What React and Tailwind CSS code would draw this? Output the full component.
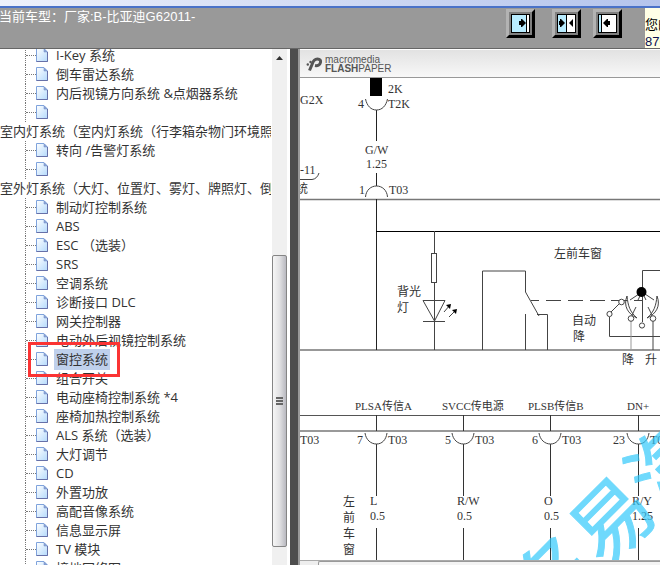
import React from "react";

const ROWS = [
  { label: "I-Key 系统" },
  { label: "倒车雷达系统" },
  { label: "内后视镜方向系统 &点烟器系统" },
  { label: "" },
  { label: "室内灯系统（室内灯系统（行李箱杂物门环境照明灯）", group: true },
  { label: "转向 /告警灯系统" },
  { label: "" },
  { label: "室外灯系统（大灯、位置灯、雾灯、牌照灯、倒车灯）", group: true },
  { label: "制动灯控制系统" },
  { label: "ABS" },
  { label: "ESC （选装）" },
  { label: "SRS" },
  { label: "空调系统" },
  { label: "诊断接口 DLC" },
  { label: "网关控制器" },
  { label: "电动外后视镜控制系统" },
  { label: "窗控系统", selected: true },
  { label: "组合开关" },
  { label: "电动座椅控制系统 *4" },
  { label: "座椅加热控制系统" },
  { label: "ALS 系统（选装）" },
  { label: "大灯调节" },
  { label: "CD" },
  { label: "外置功放" },
  { label: "高配音像系统" },
  { label: "信息显示屏" },
  { label: "TV 模块" },
  { label: "接地网络图" },
];

function PageIcon() {
  return (
    <svg className="h-[15px] w-3 shrink-0" viewBox="0 0 12 15" aria-hidden="true">
      <defs>
        <linearGradient id="sheet" x1="0" y1="0" x2="1" y2="1">
          <stop offset="0" stopColor="#ffffff" />
          <stop offset="1" stopColor="#b4dafc" />
        </linearGradient>
      </defs>
      <path d="M0.5 0.5H8L11.5 4V13.5H0.5Z" fill="url(#sheet)" stroke="#7fa3dc" />
      <path d="M11.5 4V13.5H0.5" fill="none" stroke="#6670a8" />
      <path d="M8 1V4H11Z" fill="#8fa8d8" stroke="#6f88c4" strokeWidth="0.5" />
    </svg>
  );
}

function TreeRow({ row }) {
  if (row.group) {
    return (
      <li className="flex h-[19px] items-center overflow-hidden whitespace-nowrap">
        <a href="#group">{row.label}</a>
      </li>
    );
  }
  return (
    <li className="relative ml-[25px] flex h-[19px] items-center border-l border-dotted border-[#777] whitespace-nowrap">
      <span className="w-2.5 shrink-0 border-t border-dotted border-[#777]" />
      <PageIcon />
      <a
        href="#page"
        aria-label={row.label || "page"}
        className={row.selected ? "ml-1.5 bg-[#bfd0ec] px-0.5 leading-[21px]" : "ml-2 leading-[19px]"}
      >
        {row.label}
      </a>
      {row.selected && (
        <span className="absolute -top-2 left-0.5 z-10 h-[35px] w-[92px] border-3 border-[#fb3434]" />
      )}
    </li>
  );
}

function PaneButton({ label, children }) {
  return (
    <button
      type="button"
      aria-label={label}
      className="flex size-[29px] items-center justify-center border-3 border-t-[#b3b3b3] border-r-black border-b-black border-l-[#b3b3b3] bg-[#808080]"
    >
      <svg className="h-[19px] w-[19px]" viewBox="0 0 19 19" aria-hidden="true">
        {children}
      </svg>
    </button>
  );
}

function Header() {
  return (
    <header className="flex h-[49px] shrink-0 flex-col border-b border-[#666] bg-[#999]">
      <div className="h-2 shrink-0 border-b-2 border-[#4a72c8] bg-linear-to-r from-[#eef1fb] to-[#b4c4ec]" />
      <div className="flex min-h-0 flex-1">
        <h1 className="-ml-px flex-1 whitespace-nowrap font-['Liberation_Sans','Noto_Sans_CJK_SC',sans-serif] text-[13px] leading-[17px] text-white">
          当前车型：厂家:B-比亚迪G62011-
        </h1>
        <div className="flex pt-px">
          <PaneButton label="展开左栏">
            <rect x="0.5" y="0.5" width="18" height="18" fill="#fff" stroke="#000" />
            <rect x="1" y="1" width="14" height="17" fill="#b8ecff" />
            <path d="M15.5 1V18" stroke="#000" />
            <path d="M8 7H10V5H11L15 9L11 13H10V11H8Z" fill="#000" />
          </PaneButton>
          <div className="ml-[17px]">
            <PaneButton label="左右均分">
              <rect x="0.5" y="0.5" width="18" height="18" fill="#fff" stroke="#000" />
              <rect x="1" y="1" width="8" height="17" fill="#b8ecff" />
              <path d="M9.5 1V18" stroke="#000" />
              <path d="M3 7V5H4L8 9L4 13H3V11H2V7Z" fill="#000" />
              <path d="M16 5V13L12 9Z" fill="#000" />
            </PaneButton>
          </div>
          <div className="ml-3">
            <PaneButton label="展开右栏">
              <rect x="0.5" y="0.5" width="18" height="18" fill="#fff" stroke="#000" />
              <rect x="1" y="1" width="2" height="17" fill="#b8ecff" />
              <path d="M3.5 1V18" stroke="#000" />
              <path d="M12 7H10V5H9L5 9L9 13H10V11H12Z" fill="#000" />
            </PaneButton>
          </div>
        </div>
        <div className="ml-[23px] w-[15px] overflow-hidden bg-[#ffffe6] pt-2 font-['Liberation_Sans','Noto_Sans_CJK_SC',sans-serif] text-[13px] leading-[17px] whitespace-nowrap text-black">
          <p>您的</p>
          <p>
            <span className="text-[#0c1050]">87</span>
            <span className="text-[#f0a030]">6</span>
          </p>
        </div>
      </div>
    </header>
  );
}

function VerticalScrollbar() {
  return (
    <div className="flex w-4 shrink-0 flex-col items-center border-r border-white bg-[#f0f0f0] pb-[18px]">
      <div className="flex h-[18px] items-center">
        <svg className="h-1 w-[7px]" viewBox="0 0 7 4" aria-hidden="true">
          <path d="M0 4L3.5 0L7 4Z" fill="#333" />
        </svg>
      </div>
      <div className="mt-[188px] flex w-[15px] flex-1 flex-col items-center justify-center gap-px rounded-[2px] border border-[#858585] bg-linear-to-r from-[#f6f6f6] via-[#e2e2e4] to-[#b9b9c0]">
        <span className="h-0.5 w-[7px] bg-[#666]" />
        <span className="h-0.5 w-[7px] bg-[#666]" />
        <span className="h-0.5 w-[7px] bg-[#666]" />
      </div>
    </div>
  );
}

const PINS = [
  { x: 376, name: "PLSA传信A", nameX: 355, pin: "7", pinX: 357, color: "L", value: "0.5" },
  { x: 463, name: "SVCC传电源", nameX: 442, pin: "5", pinX: 445, color: "R/W", value: "0.5" },
  { x: 550, name: "PLSB传信B", nameX: 528, pin: "6", pinX: 532, color: "O", value: "0.5" },
  { x: 638, name: "DN+", nameX: 627, pin: "23", pinX: 613, color: "R/Y", value: "1.25" },
];

function WiringDiagram() {
  return (
    <svg
      className="min-h-0 w-full flex-1 bg-white font-['Liberation_Serif','Noto_Sans_CJK_SC',serif] text-[12px]"
      role="img"
      aria-label="左前车窗"
    >
      <g transform="translate(-300 -78)">
        <g fill="none" stroke="#444" strokeWidth="1">
          <path d="M300 199.5H660M300 350H660" stroke="#777" strokeWidth="1.4" />
          <path d="M300 415.5H660" stroke="#555" />
          <path d="M300 431H660" stroke="#999" strokeWidth="2" />
          <path d="M376.5 110V141M376.5 173V186M376.5 199V350" stroke="#222" />
          <path d="M365.5 99C367 106 371 110 376.5 110S386 106 387.5 99" />
          <path d="M365.5 197C366 190 371 186 376.5 186S387 190 387.5 197" />
          <path d="M300 179.5H312Q317 179 319 173" />
          <path d="M376 231.5H660" stroke="#000" />
          <path d="M434.5 231V253M434.5 282V350" />
          <rect x="431.5" y="253.5" width="5" height="29" />
          <path d="M423 300.5H445L434.5 321ZM423 321.5H445" />
          <path d="M444 312L450 305M449 317L456 310" />
          <path d="M482.5 350V271H525.5V292L539 316M537 314.5H547.5V350M525.5 314V350" />
          <path d="M531 300.5H539M546 300.5H561M568 300.5H583M590 300.5H605M611 300.5H627M634 300.5H643" />
          <path d="M660 270.5H642.5V322" />
          <path d="M611 312L619 304M630 300L642 292L654 300M638 300L642 292L646 300" />
          <path d="M609.5 317V336.5H660M653 321V350" />
          <path d="M631 321V350" stroke="#999" />
          <path d="M627 296C623 306 628 314 637 318C630 312 628 306 627 296Z" />
          <path d="M657 296C661 306 656 314 647 318C654 312 656 306 657 296Z" />
          <path d="M636 307L632 315M648 307L652 315" />
          <g fill="#fff">
            <circle cx="609.5" cy="314" r="2.6" />
            <circle cx="621.5" cy="302" r="2.8" />
            <circle cx="631" cy="318.5" r="2.8" />
            <circle cx="653" cy="318.5" r="2.8" />
            <circle cx="642" cy="325.5" r="2.6" />
          </g>
        </g>
        <rect x="370" y="78" width="12" height="18" fill="#000" />
        <circle cx="641.5" cy="292" r="5" fill="#000" />
        <path d="M451 304L450 309L446 305ZM457 309L456 314L452 310Z" fill="#000" />

        <g fill="#333">
          <text x="388" y="93">2K</text>
          <text x="358" y="108">4</text>
          <text x="388" y="108">T2K</text>
          <text x="300" y="104">G2X</text>
          <text x="365" y="154">G/W</text>
          <text x="366" y="168">1.25</text>
          <text x="300" y="174">-11</text>
          <text x="359" y="194">1</text>
          <text x="389" y="194">T03</text>
          <text x="300" y="444">T03</text>
          <text x="296" y="193">统</text>
          <text x="397" y="296">背光</text>
          <text x="397" y="312">灯</text>
          <text x="554" y="258">左前车窗</text>
          <text x="572" y="325">自动</text>
          <text x="573" y="341">降</text>
          <text x="622" y="364">降</text>
          <text x="645" y="364">升</text>
          <text x="343" y="506">左</text>
          <text x="343" y="522">前</text>
          <text x="343" y="538">车</text>
          <text x="343" y="554">窗</text>
        </g>

        {PINS.map((p) => (
          <g key={p.name} fill="#333">
            <path
              d={`M${p.x + 0.5} 415V431M${p.x + 0.5} 444V496M${p.x + 0.5} 528V560`}
              stroke="#333"
              fill="none"
            />
            <path
              d={`M${p.x - 11} 433C${p.x - 10} 440 ${p.x - 5} 444 ${p.x + 0.5} 444S${p.x + 10} 440 ${p.x + 11} 433`}
              stroke="#444"
              fill="none"
            />
            <text x={p.nameX} y="410" className="text-[11px]">{p.name}</text>
            <text x={p.pinX} y="444">{p.pin}</text>
            <text x={p.x + 12} y="444">T03</text>
            <text x={p.x - 6} y="505">{p.color}</text>
            <text x={p.x - 6} y="520">{p.value}</text>
          </g>
        ))}

        <text
          x="608"
          y="516"
          transform="rotate(-45 608 516)"
          textAnchor="middle"
          dominantBaseline="central"
          fill="#33c9fb"
          stroke="#33c9fb"
          strokeWidth="1"
          opacity="0.7"
          className="font-['Noto_Sans_CJK_SC',sans-serif] text-[80px]"
        >
          名易汽
        </text>
      </g>
    </svg>
  );
}

function FlashPaper() {
  return (
    <main className="flex min-w-0 flex-1 flex-col overflow-hidden pt-px">
      <div className="flex h-7 shrink-0 items-center gap-0.5 border-b border-[#999] bg-linear-to-b from-[#e2e2e2] to-[#f8f8f8] pl-1.5 font-['Liberation_Sans',sans-serif] text-[#555]">
        <svg className="h-4 w-[17px]" viewBox="0 0 17 16" aria-hidden="true">
          <path
            d="M3.5 14.5L6 8.5C7 5 8.5 3 11.5 3C14 3 15 4.5 14.5 6.5C14 9 11.5 10 9 9.5"
            fill="none"
            stroke="#555"
            strokeWidth="3"
          />
          <circle cx="1.8" cy="8.5" r="1.2" fill="#555" />
          <circle cx="4.5" cy="6" r="1.2" fill="#555" />
        </svg>
        <div>
          <p className="text-[10px] leading-[9px]">macromedia</p>
          <p className="text-[10px] leading-[9px]">
            <b>FLASH</b>PAPER
          </p>
        </div>
      </div>
      <WiringDiagram />
      <div className="flex h-[5px] shrink-0 border-t border-[#aaa] bg-[#eee] pl-[18px]">
        <span className="flex-1 rounded-tl-[2px] border-t border-l border-[#999] bg-[#f4f4f4]" />
      </div>
    </main>
  );
}

export default function App() {
  return (
    <div className="flex h-screen flex-col overflow-hidden bg-white">
      <Header />
      <div className="flex min-h-0 flex-1">
        <nav className="flex w-72 shrink-0 overflow-hidden font-['Open_Sans','Noto_Sans_CJK_SC',sans-serif] text-[13px] text-[#333]">
          <ul className="-mt-[3px] min-w-0 flex-1 pr-px">
            {ROWS.map((row, i) => (
              <TreeRow key={i} row={row} />
            ))}
          </ul>
          <VerticalScrollbar />
        </nav>
        <div className="ml-0.5 w-2.5 shrink-0 border-r-2 border-[#999] bg-[#4d4d4d]" />
        <FlashPaper />
      </div>
    </div>
  );
}
